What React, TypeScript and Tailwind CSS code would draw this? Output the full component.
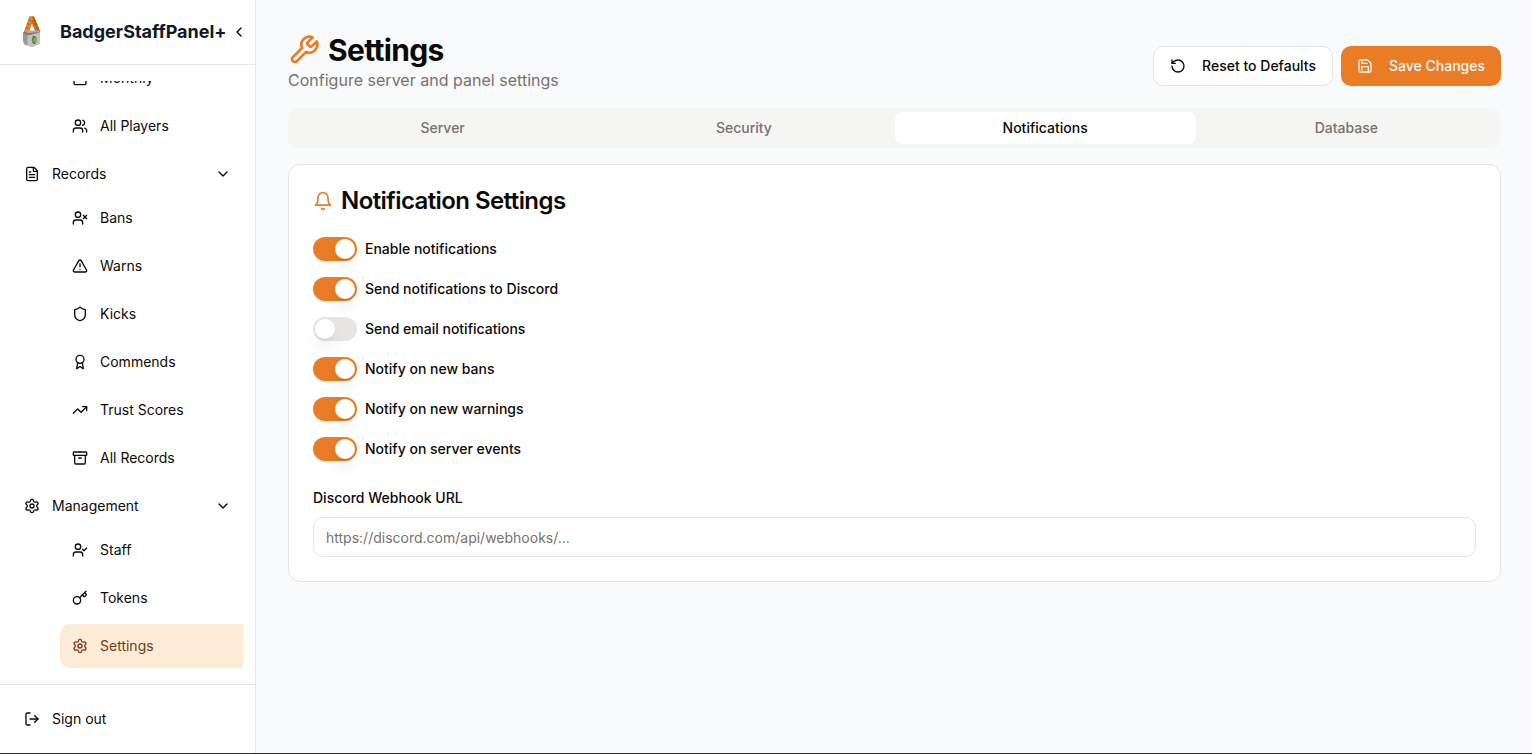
import type { ReactNode } from "react";
import {
  Archive,
  Award,
  Calendar,
  ChevronDown,
  ChevronLeft,
  FileText,
  Key,
  LogOut,
  RotateCcw,
  Save,
  Settings,
  Shield,
  TrendingUp,
  TriangleAlert,
  UserCheck,
  UserX,
  Users,
  type LucideIcon,
} from "lucide-react";

type Item = { label: string; icon: LucideIcon; active?: boolean };

const playerItems: Item[] = [
  { label: "Monthly", icon: Calendar },
  { label: "All Players", icon: Users },
];

const recordItems: Item[] = [
  { label: "Bans", icon: UserX },
  { label: "Warns", icon: TriangleAlert },
  { label: "Kicks", icon: Shield },
  { label: "Commends", icon: Award },
  { label: "Trust Scores", icon: TrendingUp },
  { label: "All Records", icon: Archive },
];

const managementItems: Item[] = [
  { label: "Staff", icon: UserCheck },
  { label: "Tokens", icon: Key },
  { label: "Settings", icon: Settings, active: true },
];

const tabs = ["Server", "Security", "Notifications", "Database"];

const toggles = [
  { label: "Enable notifications", on: true },
  { label: "Send notifications to Discord", on: true },
  { label: "Send email notifications", on: false },
  { label: "Notify on new bans", on: true },
  { label: "Notify on new warnings", on: true },
  { label: "Notify on server events", on: true },
];

function Logo() {
  return (
    <svg width="40" height="40" viewBox="0 0 40 40" className="shrink-0">
      <path d="M17.500 4.500 L22 4.500 L28 19.500 L24 21 L19.800 11.500 L16.800 20.500 L12 20 Z" fill="#d0721a" />
      <path d="M17.500 4.500 L20.500 4.500 L16.500 20 L12 19.500 Z" fill="#e08a2c" />
      <path d="M20 4.500 L22 4.500 L28 19 L25.500 20.500 Z" fill="#bf6510" />
      <path d="M16.500 8 L18.500 9 M15 11.500 L17.500 12.500 M14 15 L16.500 16 M21.500 9 L23.500 8 M23 13 L25 12 M25 16.500 L26.800 15.500" stroke="#9a4d0c" strokeWidth=".9" />
      <path d="M11 20.500 L15 18.500 L26 18.500 L28 20 L27.500 32 L20 35 L12.500 32.500 L11 29 Z" fill="#aaaaaa" />
      <path d="M11 20.500 L13 19.500 L16 21.500 L22 20.500 L28 20 L16 23.500 Z" fill="#747474" />
      <path d="M11 21 L15.500 23 L15.500 33.500 L12.500 32 L11 29 Z" fill="#999999" />
      <path d="M15.500 23.500 L28 21 L27.500 31.500 L20 35 L15.500 33.500 Z" fill="#c2c2c2" />
      <ellipse cx="22.300" cy="28" rx="2.500" ry="3.900" fill="#77805f" />
      <path d="M22 25 L24.700 26.500 L24 31 L22 30.500 Z" fill="#6ebd3c" />
      <path d="M20.800 24.500 L22.500 25.500 M21.500 30.800 L23 31.500" stroke="#5a4232" strokeWidth="1" />
    </svg>
  );
}

function OutlineIcon({ className, children }: { className: string; children: ReactNode }) {
  return (
    <svg
      viewBox="0 0 24 24"
      fill="none"
      stroke="currentColor"
      strokeWidth="2"
      strokeLinecap="round"
      strokeLinejoin="round"
      className={className}
    >
      {children}
    </svg>
  );
}

function NavItem({ label, icon: Icon, active }: Item) {
  return (
    <a
      className={
        active
          ? "flex h-11 items-center gap-3 rounded-l-[10px] bg-[#fcecd7] px-3 text-[#7a3716]"
          : "flex h-11 items-center gap-3 px-3"
      }
    >
      <Icon className="size-4 shrink-0" />
      <span>{label}</span>
    </a>
  );
}

function NavGroup({ label, icon: Icon, items }: { label: string; icon: LucideIcon; items: Item[] }) {
  return (
    <div>
      <div className="flex h-11 items-center gap-3 px-3">
        <Icon className="size-4 shrink-0" />
        <span className="flex-1">{label}</span>
        <ChevronDown className="size-4" />
      </div>
      <ItemList items={items} />
    </div>
  );
}

function ItemList({ items }: { items: Item[] }) {
  return (
    <div className="ml-12 flex flex-col gap-1">
      {items.map((item) => (
        <NavItem key={item.label} {...item} />
      ))}
    </div>
  );
}

function Sidebar() {
  return (
    <aside className="flex w-64 shrink-0 flex-col border-r border-gray-200 bg-white text-sm">
      <div className="flex h-[65px] shrink-0 items-center border-b border-gray-200 pr-2 pl-3">
        <Logo />
        <span className="ml-2 text-lg leading-7 font-bold text-gray-900">BadgerStaffPanel+</span>
        <ChevronLeft className="ml-1 size-4 shrink-0" />
      </div>
      <nav className="mx-3 my-4 flex min-h-0 flex-1 flex-col justify-end gap-1 overflow-hidden">
        <ItemList items={playerItems} />
        <NavGroup label="Records" icon={FileText} items={recordItems} />
        <NavGroup label="Management" icon={Settings} items={managementItems} />
      </nav>
      <div className="flex h-[69px] shrink-0 items-center gap-3 border-t border-gray-200 px-6">
        <LogOut className="size-4" />
        <span>Sign out</span>
      </div>
    </aside>
  );
}

function Toggle({ on }: { on: boolean }) {
  return (
    <span
      className={
        on
          ? "flex h-6 w-11 items-center justify-end rounded-full bg-[#e97c25] p-0.5"
          : "flex h-6 w-11 items-center justify-start rounded-full bg-[#e7e5e4] p-0.5"
      }
    >
      <span className="size-5 rounded-full bg-white shadow-lg" />
    </span>
  );
}

function Button({ primary, children }: { primary?: boolean; children: ReactNode }) {
  return (
    <button
      className={
        primary
          ? "flex h-10 items-center gap-4 rounded-[10px] bg-[#e97c25] px-4 text-sm font-medium text-[#fafaf9]"
          : "flex h-10 items-center gap-4 rounded-[10px] border border-[#e7e5e4] bg-white px-4 text-sm font-medium"
      }
    >
      {children}
    </button>
  );
}

export default function App() {
  return (
    <div className="flex h-[754px] flex-col overflow-hidden bg-[#f9fafb] font-[Inter,sans-serif] text-[#0c0a09]">
      <div className="flex min-h-0 flex-1">
        <Sidebar />
        <main className="flex-1 bg-[#f8fafc] pt-8 pr-[31px] pl-8">
          <header className="flex items-center justify-between">
            <div>
              <h1 className="flex items-center gap-2 text-3xl font-bold tracking-[-0.022em]">
                <OutlineIcon className="size-8 text-[#e97c25]">
                  <path d="M14.700 6.300a1 1 0 0 0 0 1.400l1.600 1.600a1 1 0 0 0 1.400 0l3.770-3.770a6 6 0 0 1-7.940 7.940l-6.910 6.910a2.120 2.120 0 0 1-3-3l6.910-6.910a6 6 0 0 1 7.940-7.940l-3.760 3.760z" />
                </OutlineIcon>
                Settings
              </h1>
              <p className="tracking-[0.001em] text-[#78716c]">Configure server and panel settings</p>
            </div>
            <div className="flex gap-2 pt-2">
              <Button>
                <RotateCcw className="size-4" />
                Reset to Defaults
              </Button>
              <Button primary>
                <Save className="size-4" />
                Save Changes
              </Button>
            </div>
          </header>

          <div className="mt-4 grid h-10 grid-cols-4 rounded-[10px] bg-[#f5f5f4] p-1 text-sm font-medium text-[#78716c]">
            {tabs.map((tab) => (
              <button
                key={tab}
                className={
                  tab === "Notifications"
                    ? "rounded-lg bg-white text-[#0c0a09]"
                    : "rounded-lg"
                }
              >
                {tab}
              </button>
            ))}
          </div>

          <section className="mt-4 h-[418px] rounded-xl border border-[#e7e5e4] bg-white px-6 pt-5">
            <h2 className="flex h-8 items-center gap-2 text-2xl font-semibold tracking-[-0.024em]">
              <OutlineIcon className="size-5 text-[#e97c25]">
                <path d="M6 8a6 6 0 0 1 12 0c0 7 3 9 3 9H3s3-2 3-9" />
                <path d="M10.300 21a1.940 1.940 0 0 0 3.400 0" />
              </OutlineIcon>
              Notification Settings
            </h2>
            <div className="mt-5 flex flex-col gap-4">
              {toggles.map((toggle) => (
                <label key={toggle.label} className="flex items-center gap-2 text-sm font-medium">
                  <Toggle on={toggle.on} />
                  {toggle.label}
                </label>
              ))}
            </div>
            <label className="mt-[30px] block text-sm leading-[14px] font-medium">Discord Webhook URL</label>
            <input
              className="mt-3 block h-10 w-full rounded-[10px] border border-[#e7e5e4] bg-white px-3 text-sm placeholder:text-[#78716c]"
              placeholder="https://discord.com/api/webhooks/..."
            />
          </section>
        </main>
      </div>
      <div className="h-px shrink-0 bg-[#2b2b2b]" />
    </div>
  );
}
